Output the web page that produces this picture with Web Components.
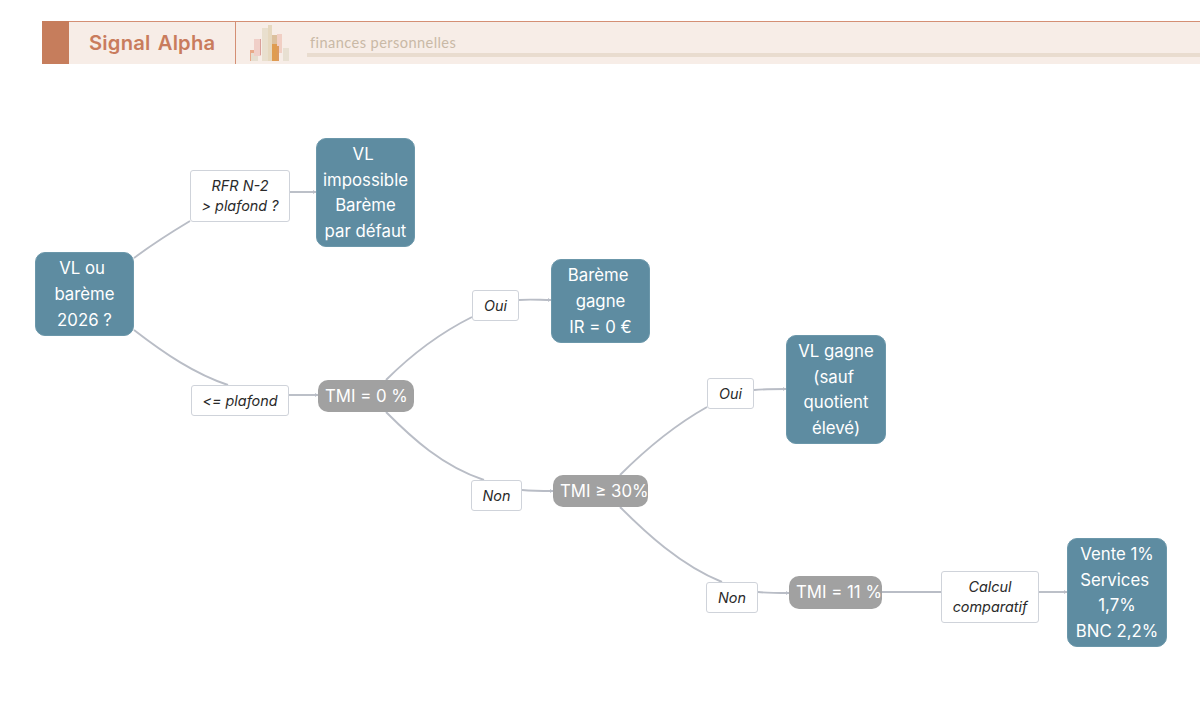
<!DOCTYPE html>
<html lang="fr"><head><meta charset="utf-8"><title>Signal Alpha</title>
<style>html,body{margin:0;background:#fff;height:100%;overflow:hidden}</style></head><body>
<site-header></site-header>
<flow-chart></flow-chart>
<script>
class SiteHeader extends HTMLElement{constructor(){super();this.attachShadow({mode:'open'}).innerHTML=`
<style>
:host{display:flex;margin:21px 0 0 42px;height:43px;background:#f7ede7;border-top:1px solid #d48f74;box-sizing:border-box;align-items:stretch}
.sq{width:27px;background:#c67d5c;margin-top:-1px}
.brand{width:167px;box-sizing:border-box;padding:0 0 0 20px;display:flex;align-items:center;font:600 20.2px/1 Inter,sans-serif;letter-spacing:.2px;word-spacing:2px;color:#c97c5d;border-right:1px solid #d48f74}
svg{display:block;margin-left:12px;flex:none;filter:blur(.35px)}
.tag{flex:1;margin-left:17px;display:flex;flex-direction:column;min-width:0}
.t{font:400 14.6px/17px Lato,sans-serif;letter-spacing:.42px;color:#c9b9a6;padding:12px 0 0 3px;height:19px}
.u{height:4px;background:#e9dccf}
</style>
<div class="sq"></div><div class="brand">Signal Alpha</div>
<svg width="42" height="42" viewBox="0 0 42 42">
<rect x="2" y="28" width="8" height="11" fill="#e8a989"/><rect x="3" y="31" width="7" height="8" fill="#e6ded0"/>
<rect x="6" y="17" width="7" height="17" fill="#f0cfc8"/><rect x="12" y="17" width="1" height="16" fill="#d9a09a"/>
<rect x="14" y="6" width="6" height="33" fill="#e9dfce"/><rect x="20" y="3" width="4" height="36" fill="#e6d8bf"/>
<rect x="24" y="13" width="5" height="26" fill="#dcc09d"/><rect x="24" y="22" width="5" height="17" fill="#df9c50"/>
<rect x="29" y="12" width="5" height="19" fill="#f1cfc4"/><rect x="29" y="24" width="2" height="15" fill="#dc9a5e"/>
<rect x="35" y="26" width="6" height="13" fill="#e8e0d2"/>
</svg>
<div class="tag"><div class="t">finances personnelles</div><div class="u"></div></div>`}}
customElements.define('site-header',SiteHeader);

class FlowNode extends HTMLElement{constructor(){super();this.attachShadow({mode:'open'}).innerHTML=`
<style>
:host{position:absolute;box-sizing:border-box;display:flex;align-items:center;justify-content:center;text-align:center;white-space:pre-line;left:var(--x);top:var(--y);width:var(--w);height:var(--h);font-family:Inter,sans-serif}
:host([kind=leaf]){background:#5e8ca1;color:#fff;border-radius:10px;font-size:16.8px;line-height:25.75px;border:1px solid #6b97aa;padding-top:1.5px}
:host([kind=test]){background:#a1a1a1;color:#fff;border-radius:10px;font-size:16.8px;line-height:25.7px;white-space:nowrap;justify-content:flex-start;padding:1px 0 0 7px}
:host([kind=label]){background:#fff;color:#2a2a2a;border:1px solid #cfd3da;border-radius:3px;font-size:14.4px;line-height:20px;font-style:italic}
</style><slot></slot>`}
connectedCallback(){const [x,y,w,h]=this.getAttribute('box').split(',');const s=this.style;s.setProperty('--x',x+'px');s.setProperty('--y',y+'px');s.setProperty('--w',w+'px');s.setProperty('--h',h+'px')}}
customElements.define('flow-node',FlowNode);

class FlowChart extends HTMLElement{constructor(){super();
const edges=['M134 258C150 246 170 233 190 221','M290 192H316','M134 330C165 354 195 374 228 385','M289 395H318','M386 380C412 354 442 332 472 317','M519 300C530 299 540 300 551 300','M386 412C412 438 442 466 484 480','M522 490C533 491 543 491 553 491','M620 475C645 450 675 425 707 407','M754 390C765 389 775 389 786 389','M620 507C645 532 680 565 722 582','M758 592C768 593 778 593 789 593','M882 592H941','M1039 592H1067'];
const nodes=[['leaf','35,252,99,84','VL ou\u00a0\nbarème\n2026 ?'],['label','190,170,100,52','RFR N-2\n> plafond ?'],['leaf','316,138,99,109','VL\u00a0\nimpossible\nBarème\npar défaut'],['label','191,385,98,31','<= plafond'],['test','318,380,96,32','TMI = 0 %'],['label','472,290,47,31','Oui'],['leaf','551,259,99,84','Barème\u00a0\ngagne\nIR = 0 €'],['label','471,480,51,31','Non'],['test','553,475,95,32','TMI ≥ 30%'],['label','707,378,47,31','Oui'],['leaf','786,335,100,109','VL gagne\n(sauf\u00a0\nquotient\nélevé)'],['label','706,582,52,31','Non'],['test','789,576,93,33','TMI = 11 %'],['label','941,571,98,52','Calcul\ncomparatif'],['leaf','1067,538,100,109','Vente 1%\nServices\u00a0\n1,7%\nBNC 2,2%']];
const short=new Set([1,3,5,7,9,11,13]);
this.attachShadow({mode:'open'}).innerHTML=`<style>:host{display:block;position:absolute;inset:0}svg{position:absolute;inset:0}path{fill:none;stroke:#b9bdc6;stroke-width:1.9}marker path{fill:#b9bdc6;stroke:none}</style>
<svg width="1200" height="721"><defs><marker id="a" markerUnits="userSpaceOnUse" markerWidth="4" markerHeight="4" refX="3" refY="2" orient="auto"><path d="M0 0L3 2L0 4Z"/></marker></defs>${edges.map((d,i)=>`<path d="${d}"${short.has(i)?' marker-end="url(#a)"':''}/>`).join('')}</svg>`;
for(const [k,b,t] of nodes){const n=document.createElement('flow-node');n.setAttribute('kind',k);n.setAttribute('box',b);n.textContent=t;this.shadowRoot.append(n)}}}
customElements.define('flow-chart',FlowChart);
</script></body></html>
